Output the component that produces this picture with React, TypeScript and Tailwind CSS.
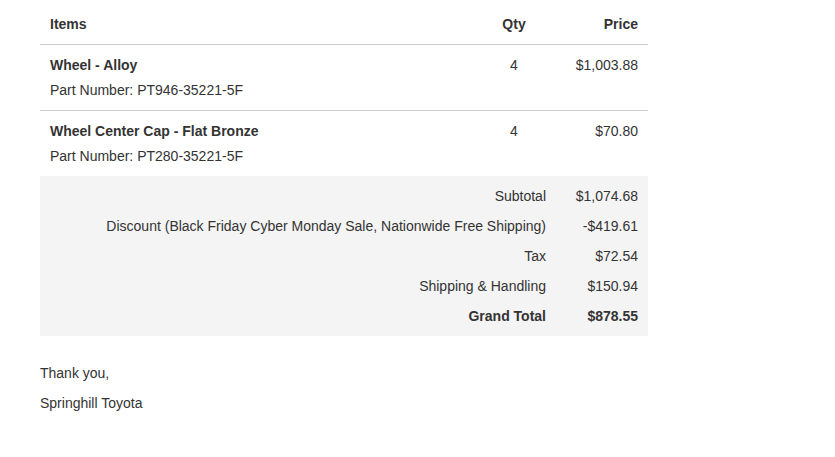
import React from "react";

const items = [
  { name: "Wheel - Alloy", part: "PT946-35221-5F", qty: 4, price: "$1,003.88" },
  { name: "Wheel Center Cap - Flat Bronze", part: "PT280-35221-5F", qty: 4, price: "$70.80" },
];

const totals = [
  { label: "Subtotal", value: "$1,074.68" },
  { label: "Discount (Black Friday Cyber Monday Sale, Nationwide Free Shipping)", value: "-$419.61" },
  { label: "Tax", value: "$72.54" },
  { label: "Shipping & Handling", value: "$150.94" },
];

export default function App() {
  return (
    <div
      className="w-[835px] h-[457px] bg-white text-[#333333] text-[14px] leading-[20px] px-[40px] pt-[4px]"
      style={{ fontFamily: '"Liberation Sans", Arial, sans-serif' }}
    >
      <div className="w-[608px]">
        <div className="flex border-b border-[#cccccc] pt-[10px] pb-[10px] font-bold">
          <div className="flex-1 pl-[10px]">Items</div>
          <div className="w-[80px] text-center">Qty</div>
          <div className="w-[94px] text-right pr-[10px]">Price</div>
        </div>
        {items.map((it, i) => (
          <div
            key={i}
            className={`flex py-[10px] ${i < items.length - 1 ? "border-b border-[#cccccc]" : ""}`}
          >
            <div className="flex-1 pl-[10px] flex flex-col gap-[5px]">
              <div className="font-bold">{it.name}</div>
              <div>Part Number: {it.part}</div>
            </div>
            <div className="w-[80px] text-center">{it.qty}</div>
            <div className="w-[94px] text-right pr-[10px]">{it.price}</div>
          </div>
        ))}
        <div className="bg-[#f4f4f4] py-[10px] flex flex-col gap-[10px]">
          {totals.map((t, i) => (
            <div key={i} className="flex">
              <div className="flex-1 text-right">{t.label}</div>
              <div className="w-[102px] text-right pr-[10px]">{t.value}</div>
            </div>
          ))}
          <div className="flex font-bold">
            <div className="flex-1 text-right">Grand Total</div>
            <div className="w-[102px] text-right pr-[10px]">$878.55</div>
          </div>
        </div>
        <div className="pt-[27px] flex flex-col gap-[10px]">
          <div>Thank you,</div>
          <div>Springhill Toyota</div>
        </div>
      </div>
    </div>
  );
}
